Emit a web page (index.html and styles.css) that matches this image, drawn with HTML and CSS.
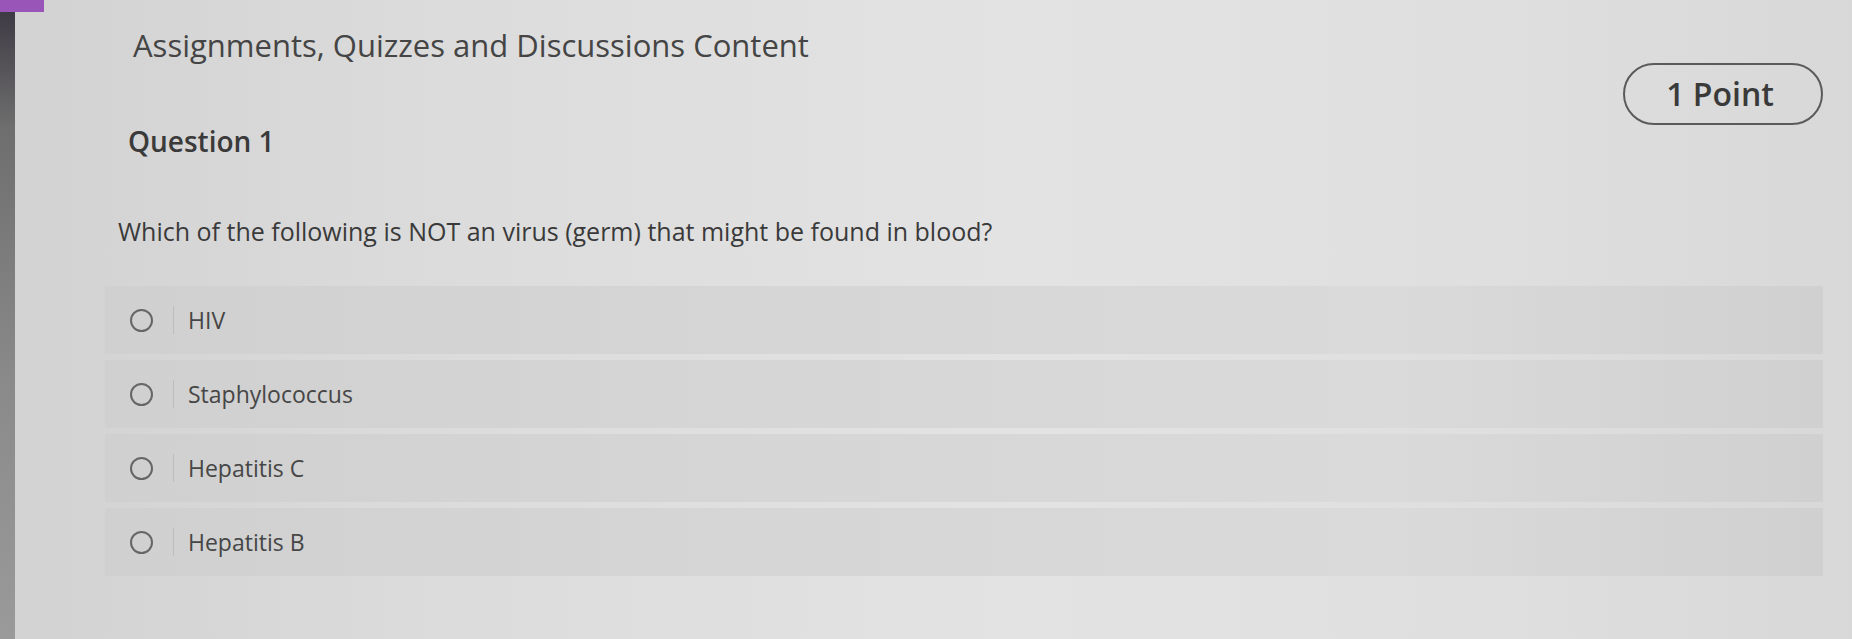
FILE: index.html
```html
<!DOCTYPE html>
<html lang="en">

<head>
    <meta charset="UTF-8">
    <meta name="viewport" content="width=device-width, initial-scale=1.0">
    <title>Question 1</title>
    <link rel="stylesheet" href="styles.css">
</head>

<body>
    <div class="page">
        <div class="edge"></div>

        <div class="content">
            <h1 class="title">Assignments, Quizzes and Discussions Content</h1>

            <div class="qhead">
                <h2 class="qnum">Question 1</h2>
                <div class="points">1 Point</div>
            </div>

            <p class="qtext">Which of the following is NOT an virus (germ) that might be found in blood?</p>

            <div class="options">
                <label class="option">
                    <span class="radio"></span>
                    <span class="sep"></span>
                    <span class="answer">HIV</span>
                </label>
                <label class="option">
                    <span class="radio"></span>
                    <span class="sep"></span>
                    <span class="answer">Staphylococcus</span>
                </label>
                <label class="option">
                    <span class="radio"></span>
                    <span class="sep"></span>
                    <span class="answer">Hepatitis C</span>
                </label>
                <label class="option">
                    <span class="radio"></span>
                    <span class="sep"></span>
                    <span class="answer">Hepatitis B</span>
                </label>
            </div>
        </div>
    </div>
</body>

</html>
```

FILE: styles.css
```css
html, body {
    margin: 0;
    height: 100%;
}

body {
    font-family: "Open Sans", "Liberation Sans", sans-serif;
    color: #3b3b3b;
    background: linear-gradient(90deg, #d2d2d2 0%, #dcdcdc 25%, #e3e3e3 55%, #dfdfdf 80%, #d8d8d8 100%);
    overflow: hidden;
}

.page {
    display: flex;
    height: 100%;
}

/* dark strip on the left with the purple corner */
.edge {
    position: relative;
    width: 15px;
    flex-shrink: 0;
    background: linear-gradient(180deg, #3a3540 0%, #6e6e6e 20%, #8a8a8a 60%, #9a9a9a 100%);
}

.edge::before {
    content: "";
    position: absolute;
    top: 0;
    left: 0;
    width: 44px;
    height: 12px;
    background: #9a55b8;
}

.content {
    flex: 1;
    padding: 27px 29px 0 90px;
}

.title {
    margin: 0 0 0 28px;
    font-size: 31px;
    font-weight: 400;
    line-height: 36px;
    color: #454545;
}

.qhead {
    display: flex;
    justify-content: space-between;
    align-items: flex-start;
}

.qnum {
    margin: 60px 0 0 23px;
    font-size: 28px;
    font-weight: 600;
    line-height: 36px;
    color: #3a3a3a;
}

.points {
    width: 190px;
    height: 58px;
    border: 2px solid #5a5a5a;
    border-radius: 31px;
    padding-right: 6px;
    box-sizing: content-box;
    font-size: 32px;
    font-weight: 600;
    line-height: 58px;
    text-align: center;
    color: #3a3a3a;
}

.qtext {
    margin: 56px 0 0 13px;
    font-size: 25px;
    line-height: 32px;
    color: #3a3a3a;
}

.options {
    display: flex;
    flex-direction: column;
    gap: 6px;
    margin-top: 39px;
}

.option {
    display: flex;
    align-items: center;
    height: 68px;
    padding-left: 25px;
    background: linear-gradient(90deg, #d0d0d0 0%, #d6d6d6 40%, #dadada 75%, #d0d0d0 100%);
}

.radio {
    width: 19px;
    height: 19px;
    border: 2.5px solid #666;
    border-radius: 50%;
}

.sep {
    width: 1px;
    height: 28px;
    margin: 0 14px 0 20px;
    background: #bdbdbd;
}

.answer {
    font-size: 23px;
    color: #464646;
}
```
